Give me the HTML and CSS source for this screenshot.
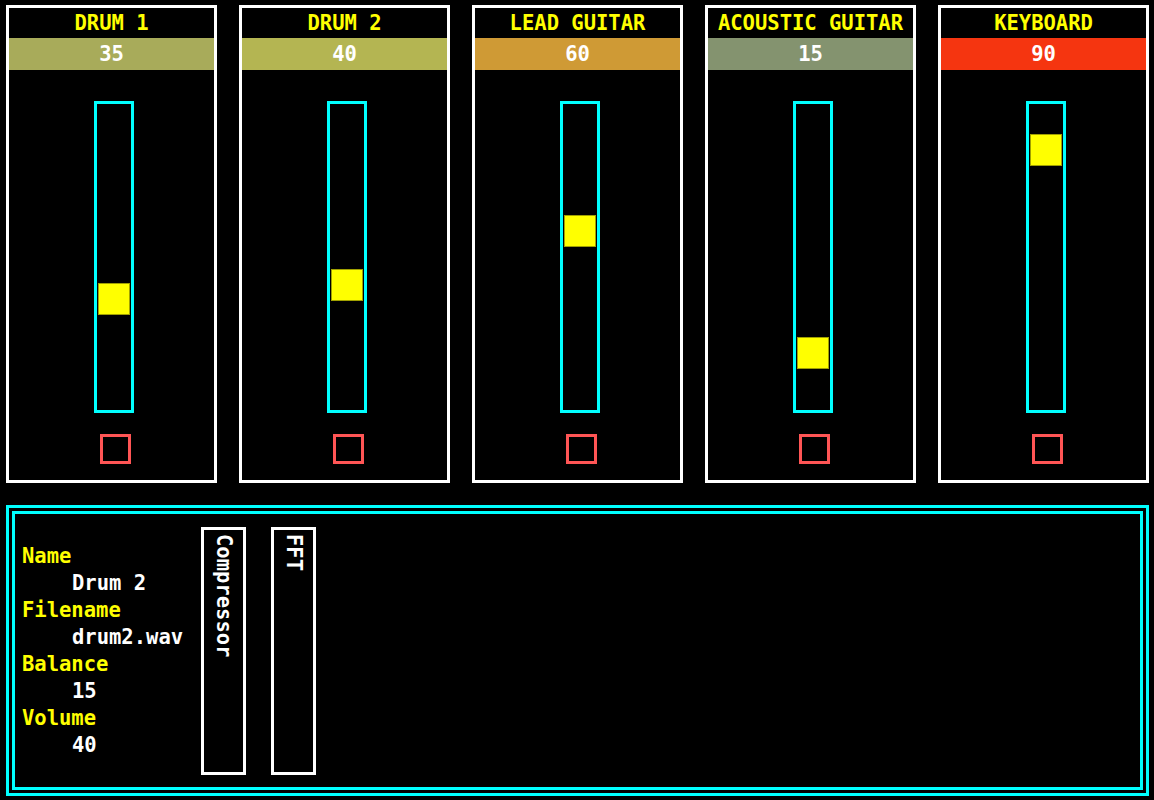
FILE: index.html
```html
<!DOCTYPE html>
<html>
<head>
<meta charset="utf-8">
<link rel="stylesheet" href="styles.css">
</head>
<body>
<div class="channels">
  <div class="channel">
    <div class="title">DRUM 1</div>
    <div class="value" style="background:#a8ab5a">35</div>
    <div class="body">
      <div class="track"><div class="thumb" style="top:178.5px"></div></div>
      <div class="mute"></div>
    </div>
  </div>
  <div class="channel">
    <div class="title">DRUM 2</div>
    <div class="value" style="background:#b4b552">40</div>
    <div class="body">
      <div class="track"><div class="thumb" style="top:165px"></div></div>
      <div class="mute"></div>
    </div>
  </div>
  <div class="channel">
    <div class="title">LEAD GUITAR</div>
    <div class="value" style="background:#cf9a35">60</div>
    <div class="body">
      <div class="track"><div class="thumb" style="top:111px"></div></div>
      <div class="mute"></div>
    </div>
  </div>
  <div class="channel">
    <div class="title">ACOUSTIC GUITAR</div>
    <div class="value" style="background:#84936f">15</div>
    <div class="body">
      <div class="track"><div class="thumb" style="top:232.5px"></div></div>
      <div class="mute"></div>
    </div>
  </div>
  <div class="channel">
    <div class="title">KEYBOARD</div>
    <div class="value" style="background:#f53510">90</div>
    <div class="body">
      <div class="track"><div class="thumb" style="top:30px"></div></div>
      <div class="mute"></div>
    </div>
  </div>
</div>
<div class="details">
  <dl class="props">
    <dt>Name</dt><dd>Drum 2</dd>
    <dt>Filename</dt><dd>drum2.wav</dd>
    <dt>Balance</dt><dd>15</dd>
    <dt>Volume</dt><dd>40</dd>
  </dl>
  <div class="effect"><span class="effect-label">Compressor</span></div>
  <div class="effect effect-next"><span class="effect-label">FFT</span></div>
</div>
</body>
</html>
```
FILE: styles.css
```css
html, body {
  background: #000;
}
body {
  margin: 5px 5px 0 6px;
  font-family: "DejaVu Sans Mono", "Liberation Mono", monospace;
  font-weight: bold;
  font-size: 20.5px;
  color: #fff;
}
.channels {
  display: flex;
  gap: 22px;
}
.channel {
  width: 211px;
  height: 478px;
  box-sizing: border-box;
  border: 3px solid #fff;
  display: flex;
  flex-direction: column;
}
.title {
  height: 30px;
  line-height: 30px;
  text-align: center;
  color: #ffff00;
  white-space: nowrap;
}
.value {
  height: 32px;
  line-height: 32px;
  text-align: center;
  color: #fff;
}
.body {
  display: flex;
  flex-direction: column;
  align-items: center;
  padding-top: 31px;
}
.track {
  position: relative;
  width: 40px;
  height: 312px;
  box-sizing: border-box;
  border: 3px solid #00ffff;
  margin-left: 5px;
}
.thumb {
  position: absolute;
  left: 1px;
  width: 32px;
  height: 32px;
  box-sizing: border-box;
  background: #ffff00;
  border: 1px solid #a0a000;
}
.mute {
  margin-top: 21px;
  margin-left: 8px;
  width: 31px;
  height: 30px;
  box-sizing: border-box;
  border: 3px solid #ff5555;
}
.details {
  margin-top: 22px;
  height: 291px;
  box-sizing: border-box;
  border: 9px double #00ffff;
  display: flex;
  align-items: center;
  padding-left: 7px;
}
.props {
  margin: 0;
  width: 179px;
  flex: none;
  line-height: 27px;
}
.props dt {
  color: #ffff00;
}
.props dd {
  margin-left: 50px;
  color: #fff;
}
.effect {
  flex: none;
  width: 45px;
  height: 248px;
  box-sizing: border-box;
  border: 3px solid #fff;
  display: flex;
  justify-content: center;
  padding-top: 4px;
}
.effect-next {
  margin-left: 25px;
}
.effect-label {
  writing-mode: vertical-rl;
  color: #fff;
  line-height: 24px;
}
```
